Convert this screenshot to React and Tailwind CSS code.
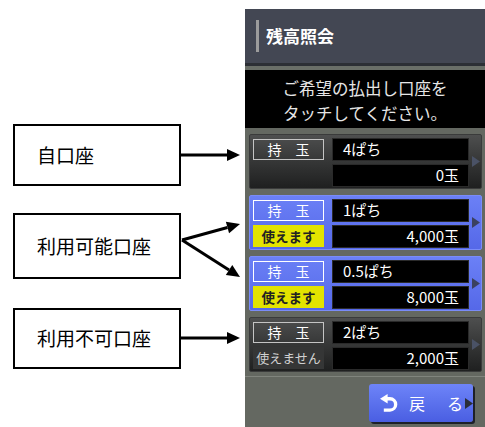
import React from "react";

const font = { fontFamily: '"Noto Sans CJK JP", "Noto Sans", sans-serif' };

const accounts = [
  { name: "4ぱち", balance: "0玉", status: "own" },
  { name: "1ぱち", balance: "4,000玉", status: "ok" },
  { name: "0.5ぱち", balance: "8,000玉", status: "ok" },
  { name: "2ぱち", balance: "2,000玉", status: "ng" },
];

const Arrow = ({ x1, y1, x2, y2 }) => {
  const a = Math.atan2(y2 - y1, x2 - x1);
  const len = 13;
  const w = 6;
  const bx = x2 - len * Math.cos(a);
  const by = y2 - len * Math.sin(a);
  const px = -Math.sin(a) * w;
  const py = Math.cos(a) * w;
  return (
    <g>
      <line x1={x1} y1={y1} x2={bx} y2={by} stroke="#000" strokeWidth="3" />
      <polygon
        points={`${x2},${y2} ${bx + px},${by + py} ${bx - px},${by - py}`}
        fill="#000"
      />
    </g>
  );
};

const Label = ({ text, className }) => (
  <div
    className={`w-[168px] border-2 border-black bg-white flex items-center pl-[22px] text-[19px] text-black ${className}`}
  >
    {text}
  </div>
);

const AccountCard = ({ acc }) => {
  const blue = acc.status === "ok";
  return (
    <div
      className={`h-[55px] rounded-[2px] flex pl-[3px] pt-[3px] border ${
        blue
          ? "bg-gradient-to-b from-[#6b80f6] to-[#5568e8] border-[#7a8cf8]"
          : "bg-gradient-to-b from-[#4e4f4f] to-[#1f2020] border-[#3a3b3b]"
      }`}
    >
      <div className="w-[71px] flex flex-col">
        <div
          className={`mt-[1px] h-[21px] border flex items-center justify-center text-[14px] text-white ${
            blue ? "border-white" : "border-[#c4c4c4]"
          }`}
        >
          持　玉
        </div>
        {acc.status === "ok" && (
          <div className="mt-[4px] h-[22px] bg-[#e3e300] flex items-center justify-center text-[13.5px] font-bold text-[#222]">
            使えます
          </div>
        )}
        {acc.status === "ng" && (
          <div className="mt-[4px] h-[22px] bg-[#353636] flex items-center justify-center text-[13px] text-[#d0d0d0]">
            使えません
          </div>
        )}
      </div>
      <div className="ml-[8px] w-[137px] flex flex-col gap-[3px]">
        <div className="h-[23px] bg-black border border-[#2a2a2a] flex items-center pl-[10px] text-[15px] text-white">
          {acc.name}
        </div>
        <div className="h-[23px] bg-black border border-[#2a2a2a] flex items-center justify-end pr-[9px] text-[15px] text-white">
          {acc.balance}
        </div>
      </div>
      <div className="flex-1 flex items-center justify-center pb-[3px] pl-[2px]">
        <svg width="8" height="11" viewBox="0 0 8 11">
          <polygon points="0,0 8,5.5 0,11" fill={blue ? "#3b4160" : "#4a5266"} />
        </svg>
      </div>
    </div>
  );
};

export default function App() {
  return (
    <div className="w-[485px] h-[427px] bg-white flex overflow-hidden" style={font}>
      {/* annotation column */}
      <div className="w-[245px] pl-[13px] flex flex-col">
        <div className="mt-[124px] flex h-[62px]">
          <Label text="自口座" className="h-[62px]" />
          <svg width="60" height="62" className="shrink-0">
            <Arrow x1={0} y1={31} x2={59} y2={31} />
          </svg>
        </div>
        <div className="mt-[27px] flex h-[66px]">
          <Label text="利用可能口座" className="h-[66px]" />
          <svg width="60" height="66" className="shrink-0 overflow-visible">
            <Arrow x1={1} y1={27} x2={59} y2={11} />
            <Arrow x1={1} y1={27} x2={59} y2={64} />
          </svg>
        </div>
        <div className="mt-[29px] flex h-[61px]">
          <Label text="利用不可口座" className="h-[61px]" />
          <svg width="60" height="61" className="shrink-0">
            <Arrow x1={0} y1={30} x2={59} y2={30} />
          </svg>
        </div>
      </div>

      {/* device panel */}
      <div className="w-[240px] mt-[9px] bg-[#646861] flex flex-col">
        <div className="h-[54px] bg-[#434753] flex items-center pl-[11px]">
          <div className="w-[3px] h-[32px] bg-[#9c9c9c]" />
          <div className="ml-[7px] text-[17px] font-bold text-white">残高照会</div>
        </div>
        <div className="h-[3px] bg-[#2c2f35]" />
        <div className="h-[4px] bg-[#6a6f68]" />
        <div className="h-[58px] bg-black pt-[6px] text-center text-[16.5px] leading-[25px] text-[#e6e6e6]">
          <div>ご希望の払出し口座を</div>
          <div>タッチしてください。</div>
        </div>

        <div className="pt-[6px] pl-[4px] pr-[3px] flex flex-col gap-[6px]">
          {accounts.map((acc, i) => (
            <AccountCard key={i} acc={acc} />
          ))}
        </div>

        <div className="mt-[4px] h-[1px] bg-[#80847d]" />

        <div className="flex justify-end pr-[12px] mt-[7px]">
          <button className="relative w-[104px] h-[38px] rounded-[3px] bg-gradient-to-b from-[#6e84f8] to-[#4a5ee2] shadow-[2px_2px_0_#1e2028] flex items-center pl-[11px] text-white text-[16px]">
            <svg width="19" height="18" viewBox="0 0 20 19">
              <polygon points="0,5 8,0 8,10" fill="#fff" />
              <path d="M7 5 H10.5 A6 6 0 0 1 10.5 17 H4" stroke="#fff" strokeWidth="3.5" fill="none" />
            </svg>
            <span className="ml-[10px] tracking-[0px]">戻</span>
            <span className="ml-[22px]">る</span>
            <svg width="8" height="11" viewBox="0 0 8 11" className="ml-auto">
              <polygon points="0,0 8,5.5 0,11" fill="#2a2d38" />
            </svg>
          </button>
        </div>
      </div>
    </div>
  );
}
